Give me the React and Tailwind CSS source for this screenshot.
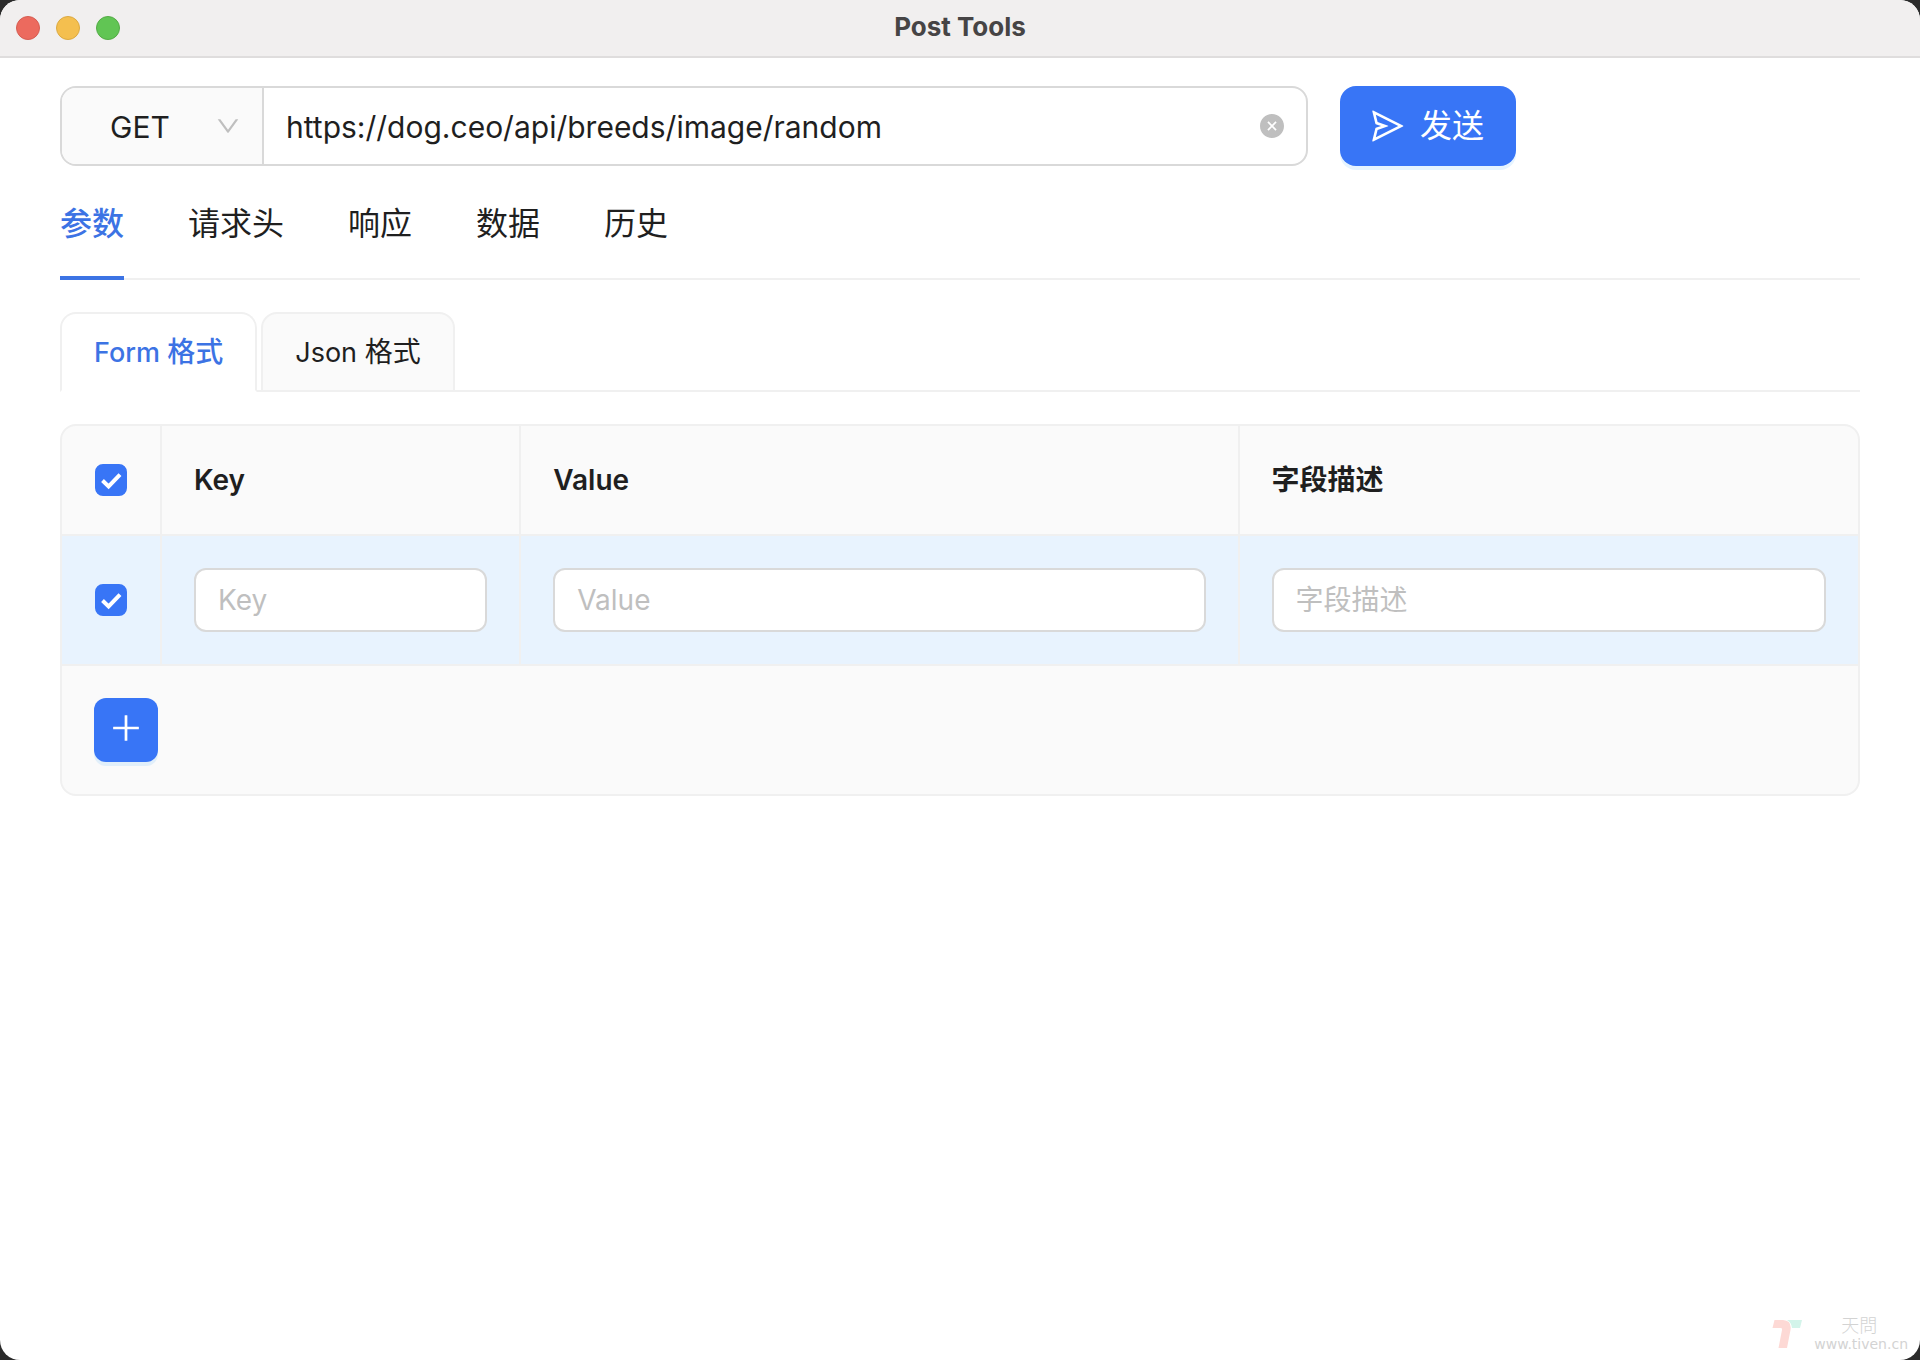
import React, { useState } from "react";
import {
  AiFillCloseCircle,
  AiOutlineDown,
  AiOutlinePlus,
  AiOutlineSend,
} from "react-icons/ai";

// trims the empty margin round the ant design glyphs
const ICON_BOX = "64 64 896 896";

const METHODS = ["GET", "POST", "PUT", "DELETE"];

const MAIN_TABS = ["参数", "请求头", "响应", "数据", "历史"];

const FORMAT_TABS = ["Form", "Json"];

const COLUMNS = [
  { name: "Key", width: "w-[20%]" },
  { name: "Value", width: "w-[40%]" },
  { name: "字段描述", width: "" },
];

const TitleBar = () => (
  <header className="relative flex h-[58px] items-center justify-center border-b-2 border-[#dfdddd] bg-[#f1efef]">
    <div className="absolute left-4 flex gap-4">
      <span className="size-6 rounded-full border border-[#d55d52] bg-[#ec6a5e]" />
      <span className="size-6 rounded-full border border-[#dba942] bg-[#f4bf4f]" />
      <span className="size-6 rounded-full border border-[#54ab46] bg-[#61c554]" />
    </div>
    <h1 className="pb-0.5 text-[26px] leading-8 font-bold text-[#464445]">
      Post Tools
    </h1>
  </header>
);

const RequestBar = () => {
  const [method, setMethod] = useState("GET");
  const [url, setUrl] = useState("https://dog.ceo/api/breeds/image/random");

  return (
    <form
      className="flex gap-8"
      onSubmit={(event) => event.preventDefault()}
    >
      <div className="flex h-20 w-[65vw] overflow-hidden rounded-2xl border-2 border-[#d9d9d9] bg-white">
        <div className="relative w-[202px] shrink-0 border-r-2 border-[#d9d9d9] bg-[#fafafa]">
          <select
            aria-label="请求方法"
            className="size-full appearance-none pt-0.5 pl-12 text-[30px] outline-none"
            value={method}
            onChange={(event) => setMethod(event.target.value)}
          >
            {METHODS.map((item) => (
              <option key={item}>{item}</option>
            ))}
          </select>
          <AiOutlineDown
            viewBox={ICON_BOX}
            className="pointer-events-none absolute top-[26px] right-[22px] size-6 text-[#bfbfbf]"
          />
        </div>
        <input
          aria-label="请求地址"
          className="min-w-0 flex-1 pt-0.5 pl-[22px] text-[30px] outline-none"
          value={url}
          onChange={(event) => setUrl(event.target.value)}
        />
        <button
          type="button"
          aria-label="清空"
          className="px-[22px] text-[#bfbfbf]"
          onClick={() => setUrl("")}
        >
          <AiFillCloseCircle viewBox={ICON_BOX} className="size-6" />
        </button>
      </div>
      <button
        type="submit"
        className="flex h-20 items-center gap-4 rounded-2xl bg-[#3875f6] px-8 text-[32px] text-white shadow-[0_4px_0_rgba(5,145,255,0.1)]"
      >
        <AiOutlineSend viewBox={ICON_BOX} className="size-8" />
        发送
      </button>
    </form>
  );
};

const MainTabs = () => {
  const [active, setActive] = useState(0);

  return (
    <div
      role="tablist"
      className="flex gap-16 text-[32px] leading-[52px] shadow-[inset_0_-2px_0_#f0f0f0]"
    >
      {MAIN_TABS.map((tab, index) => (
        <button
          key={tab}
          role="tab"
          aria-selected={index === active}
          className={
            index === active
              ? "border-b-4 border-[#3c73e4] pt-8 pb-[26px] font-medium text-[#3c73e4]"
              : "border-b-4 border-transparent pt-8 pb-[26px]"
          }
          onClick={() => setActive(index)}
        >
          {tab}
        </button>
      ))}
    </div>
  );
};

const FormatTabs = () => {
  const [active, setActive] = useState(0);

  return (
    <div
      role="tablist"
      className="mt-8 flex gap-1 text-[28px] leading-[44px] shadow-[inset_0_-2px_0_#f0f0f0]"
    >
      {FORMAT_TABS.map((tab, index) => (
        <button
          key={tab}
          role="tab"
          aria-selected={index === active}
          className={
            index === active
              ? "h-20 rounded-t-2xl border-2 border-[#f0f0f0] border-b-white bg-white px-8 font-medium text-[#3c73e4]"
              : "h-20 rounded-t-2xl border-2 border-[#f0f0f0] bg-[#fafafa] px-8"
          }
          onClick={() => setActive(index)}
        >
          <span className="text-[27px]">{tab} </span>
          格式
        </button>
      ))}
    </div>
  );
};

const Checkbox = ({ label, checked, onChange }) => (
  <label className="relative mx-auto block size-8">
    <input
      type="checkbox"
      aria-label={label}
      className="block size-8 appearance-none rounded-lg border-2 border-[#d9d9d9] bg-white checked:border-[#3875f6] checked:bg-[#3875f6]"
      checked={checked}
      onChange={(event) => onChange(event.target.checked)}
    />
    <svg
      viewBox="0 0 32 32"
      className="pointer-events-none absolute inset-0 size-8"
      fill="none"
      stroke="#fff"
      strokeWidth="4"
    >
      <path d="M7.5 16.5 L13.6 22.4 L25 10.6" />
    </svg>
  </label>
);

const ParamsTable = () => {
  const [rows, setRows] = useState([{ id: 1, checked: true }]);

  const toggleAll = (checked) => {
    setRows(rows.map((row) => ({ ...row, checked })));
  };

  const toggleRow = (id, checked) => {
    setRows(rows.map((row) => (row.id === id ? { ...row, checked } : row)));
  };

  const addRow = () => {
    setRows([...rows, { id: rows.length + 1, checked: true }]);
  };

  return (
    <div className="mt-8 overflow-hidden rounded-2xl border-2 border-[#f0f0f0] bg-[#fafafa]">
      <table className="w-full table-fixed border-separate border-spacing-0 text-[28px] leading-[44px]">
        <thead>
          <tr>
            <th className="w-[100px] border-r-2 border-b-2 border-[#f0f0f0] p-0">
              <Checkbox
                label="全选"
                checked={rows.every((row) => row.checked)}
                onChange={toggleAll}
              />
            </th>
            {COLUMNS.map((column) => (
              <th
                key={column.name}
                className={`${column.width} border-r-2 border-b-2 border-[#f0f0f0] p-8 text-left font-semibold last:border-r-0`}
              >
                {column.name}
              </th>
            ))}
          </tr>
        </thead>
        <tbody>
          {rows.map((row) => (
            <tr key={row.id} className="bg-[#e8f3fe]">
              <td className="border-r-2 border-b-2 border-[#f0f0f0] p-0">
                <Checkbox
                  label="选择"
                  checked={row.checked}
                  onChange={(checked) => toggleRow(row.id, checked)}
                />
              </td>
              {COLUMNS.map((column) => (
                <td
                  key={column.name}
                  className="border-r-2 border-b-2 border-[#f0f0f0] p-8 last:border-r-0"
                >
                  <input
                    aria-label={column.name}
                    placeholder={column.name}
                    className="block h-16 w-full rounded-xl border-2 border-[#d9d9d9] bg-white px-[22px] outline-none placeholder:text-[#bfbfbf]"
                  />
                </td>
              ))}
            </tr>
          ))}
        </tbody>
        <tfoot>
          <tr>
            <td colSpan={4} className="p-8">
              <button
                aria-label="添加"
                className="flex size-16 items-center justify-center rounded-xl bg-[#3875f6] pb-1 text-white shadow-[0_4px_0_rgba(5,145,255,0.1)]"
                onClick={addRow}
              >
                <AiOutlinePlus viewBox={ICON_BOX} className="size-8" />
              </button>
            </td>
          </tr>
        </tfoot>
      </table>
    </div>
  );
};

const Watermark = () => (
  <div className="pointer-events-none absolute right-3 bottom-2 flex items-center gap-3 text-[#d3d3d3]">
    <svg viewBox="0 0 30 30" className="size-[30px]">
      <path d="M2.500 1 H11 Q20 1.500 18.500 11 L15 29 H6.500 L10 11 Q10.500 9 8.500 9 H0.500 Z" fill="#fdd9d5" />
      <path d="M15 1 H30 L28 9 H20 Q19.500 3.500 15 1 Z" fill="#d3f4ea" />
    </svg>
    <div className="text-center">
      <div className="pr-1 text-lg leading-5 font-light">天問</div>
      <div className="font-['DejaVu_Sans'] text-sm leading-4">www.tiven.cn</div>
    </div>
  </div>
);

export default () => (
  <div className="bg-[#2b2b2b] font-['Inter','Noto_Sans_CJK_SC',sans-serif] text-[#1f1f1f]">
    <div className="relative min-h-screen overflow-hidden rounded-[20px] bg-white">
      <TitleBar />
      <main className="px-[60px] pt-7">
        <RequestBar />
        <MainTabs />
        <FormatTabs />
        <ParamsTable />
      </main>
      <Watermark />
    </div>
  </div>
);
